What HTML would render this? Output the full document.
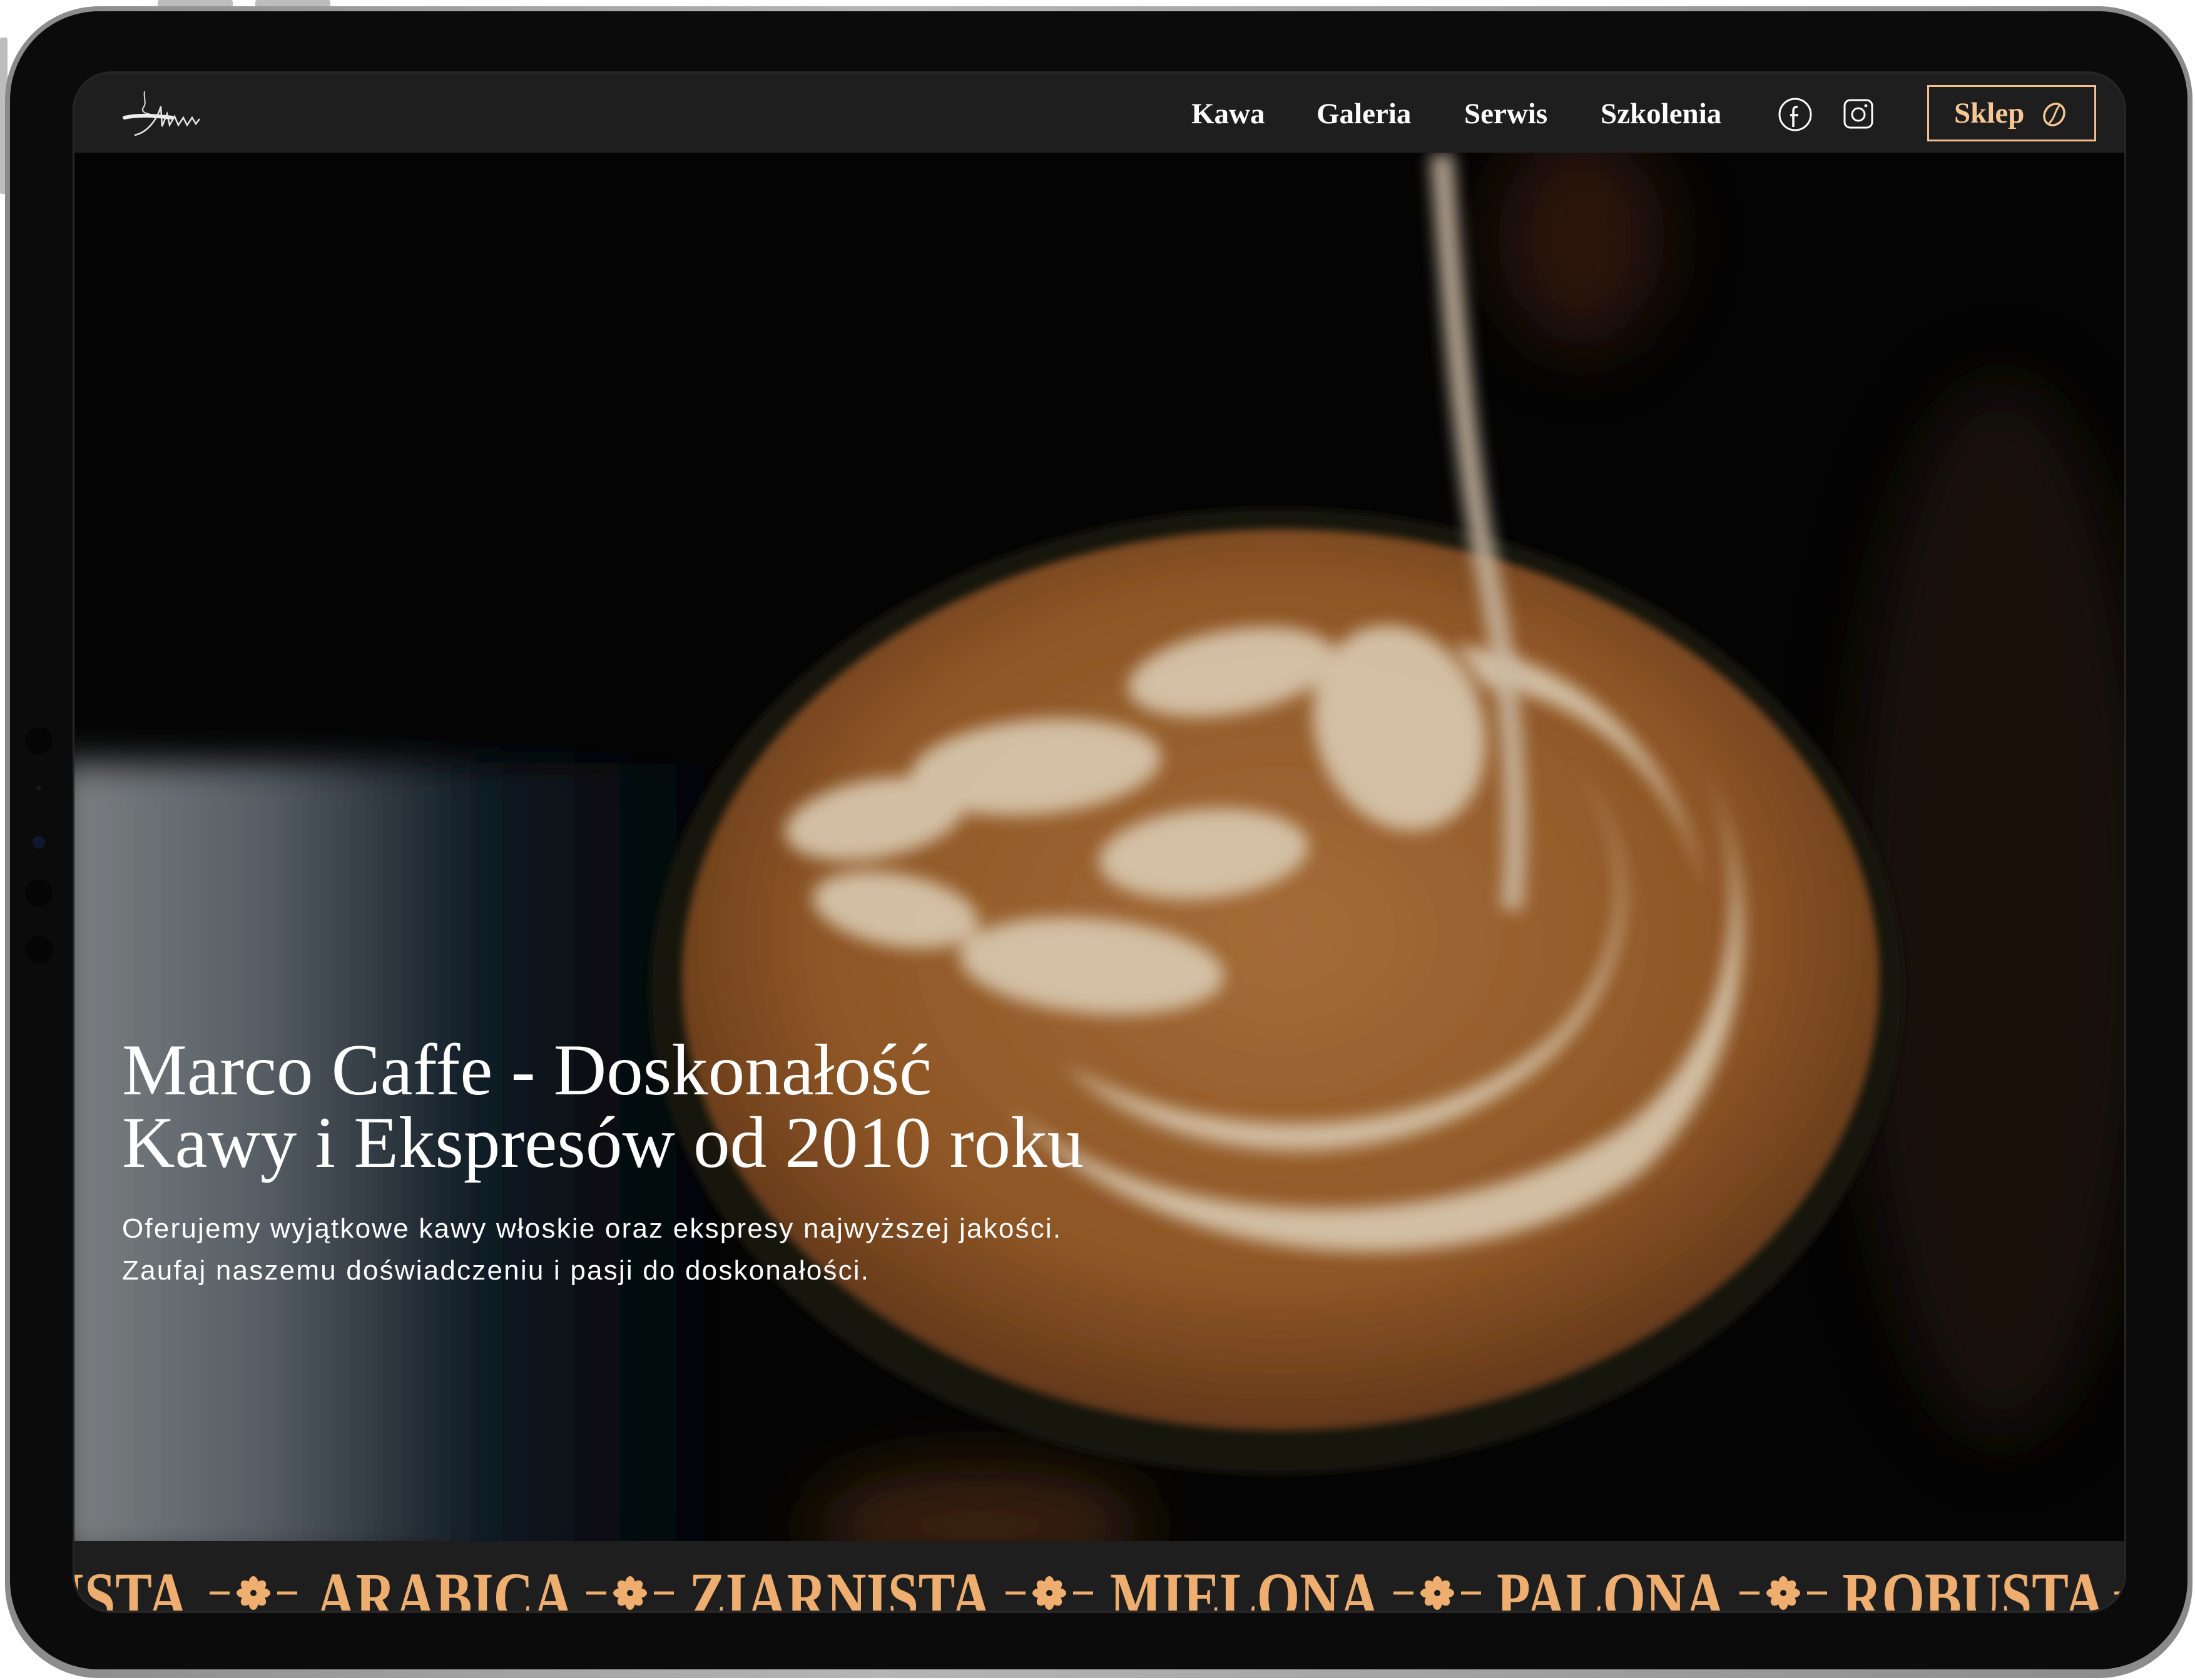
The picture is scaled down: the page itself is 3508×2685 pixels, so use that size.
<!DOCTYPE html>
<html><head><meta charset="utf-8"><style>
*{margin:0;padding:0;box-sizing:border-box}
html,body{width:3508px;height:2685px;background:#fff;overflow:hidden;position:relative;font-family:"Liberation Sans",sans-serif}
.abs{position:absolute}
.nav a{position:absolute;top:34px;font-family:"Liberation Serif",serif;font-weight:bold;font-size:47px;color:#fff;text-decoration:none;line-height:60px}
.mq{position:absolute;top:34px;font-family:"Liberation Serif",serif;font-weight:bold;font-size:110px;line-height:110px;color:#eeae70;transform:scaleX(.8);transform-origin:0 0;white-space:nowrap}
</style></head><body>
<div class="abs" style="left:252px;top:0;width:120px;height:12px;background:#bdbdbd;border-radius:3px"></div>
<div class="abs" style="left:408px;top:0;width:120px;height:12px;background:#bdbdbd;border-radius:3px"></div>
<div class="abs" style="left:0;top:60px;width:12px;height:250px;background:#bdbdbd;border-radius:3px"></div>
<div class="abs" style="left:8px;top:10px;width:3496px;height:2672px;border-radius:150px;background:linear-gradient(90deg,#8a8a8a,#b5b5b5 40%,#8a8a8a)"></div>
<div class="abs" style="left:16px;top:18px;width:3480px;height:2650px;border-radius:142px;background:#0b0b0b"></div>
<div class="abs" style="left:40px;top:1162px;width:44px;height:44px;border-radius:50%;background:#050505"></div>
<div class="abs" style="left:58px;top:1255px;width:8px;height:8px;border-radius:50%;background:#1a1a1a"></div>
<div class="abs" style="left:52px;top:1336px;width:20px;height:20px;border-radius:50%;background:#101830"></div>
<div class="abs" style="left:40px;top:1405px;width:44px;height:44px;border-radius:50%;background:#050505"></div>
<div class="abs" style="left:40px;top:1496px;width:44px;height:44px;border-radius:50%;background:#050505"></div>
<div class="abs" style="left:116px;top:114px;width:3282px;height:2464px;border-radius:62px;background:#262626"></div>
<div class="abs" style="left:119px;top:118px;width:3276px;height:2456px;border-radius:58px;background:#1e1e1e;overflow:hidden">
  <svg class="abs" style="left:0;top:126px" width="3276" height="2219" viewBox="53 109 1465 992" preserveAspectRatio="none">
    <defs>
      <filter id="b1" x="-50%" y="-50%" width="200%" height="200%"><feGaussianBlur stdDeviation="6"/></filter>
      <filter id="b2" x="-100%" y="-100%" width="300%" height="300%"><feGaussianBlur stdDeviation="25"/></filter>
      <filter id="b4" x="-50%" y="-50%" width="200%" height="200%"><feGaussianBlur stdDeviation="12"/></filter>
      <filter id="b3" x="-20%" y="-20%" width="140%" height="140%"><feGaussianBlur stdDeviation="3"/></filter>
      <radialGradient id="cr" cx="0.5" cy="0.45" r="0.55">
        <stop offset="0" stop-color="#a46c38"/><stop offset="0.7" stop-color="#8e5626"/><stop offset="1" stop-color="#63381a"/>
      </radialGradient>
      <linearGradient id="lp" x1="0" x2="1" y1="0" y2="0">
        <stop offset="0" stop-color="#7e8184"/><stop offset="0.3" stop-color="#555d63"/><stop offset="0.6" stop-color="#111c26"/><stop offset="1" stop-color="#0a1018" stop-opacity="0"/>
      </linearGradient>
    </defs>
    <rect x="53" y="109" width="1465" height="992" fill="#040404"/>
    <ellipse cx="1130" cy="170" rx="60" ry="80" fill="#3a1a10" filter="url(#b2)" opacity=".7"/>
    <ellipse cx="1430" cy="650" rx="110" ry="380" fill="#22120c" filter="url(#b2)" opacity=".7"/>
    <rect x="40" y="545" width="500" height="570" fill="url(#lp)" filter="url(#b4)"/>
    <ellipse cx="700" cy="1090" rx="120" ry="40" fill="#3a2010" filter="url(#b2)"/>
    <ellipse cx="912" cy="708" rx="448" ry="345" fill="#161310" filter="url(#b3)"/>
    <ellipse cx="915" cy="700" rx="428" ry="322" fill="url(#cr)" filter="url(#b3)"/>
    <g fill="#d6c4aa" filter="url(#b1)" opacity=".95">
      <path d="M720 790 C820 880 1030 890 1160 805 C1240 745 1260 620 1210 530 C1270 640 1250 770 1170 840 C1040 930 820 905 720 790Z"/>
      <path d="M760 760 C860 820 1020 820 1110 740 C1170 680 1170 600 1120 540 C1190 620 1160 720 1090 770 C980 850 830 830 760 760Z"/>
      <ellipse cx="625" cy="585" rx="65" ry="28" transform="rotate(-10 625 585)"/>
      <ellipse cx="740" cy="548" rx="90" ry="34" transform="rotate(-5 740 548)"/>
      <ellipse cx="640" cy="650" rx="60" ry="26" transform="rotate(10 640 650)"/>
      <ellipse cx="780" cy="690" rx="95" ry="34" transform="rotate(5 780 690)"/>
      <ellipse cx="860" cy="610" rx="75" ry="32" transform="rotate(-5 860 610)"/>
      <ellipse cx="880" cy="480" rx="75" ry="30" transform="rotate(-10 880 480)"/>
      <ellipse cx="1000" cy="520" rx="60" ry="75" transform="rotate(-20 1000 520)"/>
      <path d="M1040 460 C1130 470 1200 540 1220 640 C1200 560 1140 500 1060 490Z"/>
    </g>
    <path d="M1030 110 C1040 250 1050 350 1065 420 C1085 520 1085 600 1080 650" stroke="#c9b8a2" stroke-width="16" fill="none" filter="url(#b1)" opacity=".9"/>
  </svg>
  <div class="abs" style="left:0;top:0;width:3276px;height:126px;background:#1e1e1e"></div>
  <svg class="abs" style="left:76px;top:24px" width="170" height="80" viewBox="0 0 170 80">
    <path d="M36 4 C34 14 40 22 34 30 C30 36 38 40 44 40" stroke="#ddd" stroke-width="2" fill="none"/>
    <path d="M4 46 C30 40 60 44 80 46" stroke="#eee" stroke-width="6" fill="none" stroke-linecap="round"/>
    <path d="M20 74 C40 70 56 50 62 28 L64 60 L72 40 L76 58 L84 44 L90 58 L98 46 L104 58 L112 46 L118 56 L124 48" stroke="#e6e6e6" stroke-width="2.5" fill="none"/>
  </svg>
  <div class="nav">
    <a style="left:1785px">Kawa</a>
    <a style="left:1985px">Galeria</a>
    <a style="left:2221px">Serwis</a>
    <a style="left:2439px">Szkolenia</a>
  </div>
  <svg class="abs" style="left:2722px;top:37px" width="56" height="56" viewBox="0 0 56 56">
    <circle cx="28" cy="28" r="25" stroke="#fff" stroke-width="3" fill="none"/>
    <path d="M32 16 C26 15 25 19 25 23 L25 48 M20 29 L33 29" stroke="#fff" stroke-width="3.5" fill="none"/>
  </svg>
  <svg class="abs" style="left:2826px;top:39px" width="50" height="50" viewBox="0 0 50 50">
    <rect x="3" y="3" width="44" height="44" rx="9" stroke="#fff" stroke-width="3" fill="none"/>
    <circle cx="25" cy="26" r="10" stroke="#fff" stroke-width="3" fill="none"/>
    <circle cx="37" cy="12" r="2.5" fill="#fff"/>
  </svg>
  <div class="abs" style="left:2961px;top:18px;width:270px;height:90px;border:3px solid #f2c08e;color:#f6c795;font-family:'Liberation Serif',serif;font-weight:bold;font-size:47px;line-height:84px;padding-left:40px">Sklep</div>
  <svg class="abs" style="left:3142px;top:43px" width="44" height="44" viewBox="0 0 44 44">
    <ellipse cx="22" cy="22" rx="15" ry="18" transform="rotate(35 22 22)" stroke="#f6c795" stroke-width="3.5" fill="none"/>
    <path d="M30 8 C22 18 24 26 14 36" stroke="#f6c795" stroke-width="3" fill="none"/>
  </svg>
  <div class="abs" style="left:76px;top:1535px;font-family:'Liberation Serif',serif;font-size:117px;line-height:116px;color:#fff;white-space:nowrap">Marco Caffe - Doskonałość<br>Kawy i Ekspresów od 2010 roku</div>
  <div class="abs" style="left:76px;top:1812px;font-size:44px;line-height:67px;letter-spacing:2.2px;color:#fff;white-space:nowrap">Oferujemy wyjątkowe kawy włoskie oraz ekspresy najwyższej jakości.<br>Zaufaj naszemu doświadczeniu i pasji do doskonałości.</div>
  <div class="abs" style="left:0;top:2345px;width:3276px;height:111px;background:#1e1e1e;overflow:hidden">
    <div class="mq" style="left:-18px">ISTA</div>
    <div class="mq" style="left:386px">ARABICA</div>
    <div class="mq" style="left:982px">ZIARNISTA</div>
    <div class="mq" style="left:1655px">MIELONA</div>
    <div class="mq" style="left:2273px">PALONA</div>
    <div class="mq" style="left:2825px">ROBUSTA</div>
    <svg class="abs" style="left:0;top:0" width="3276" height="111" viewBox="0 0 3276 111">
      <defs>
        <g id="fl">
          <path d="M-70 0 L-38 0 M38 0 L70 0" stroke="#eeae70" stroke-width="5"/>
          <g fill="#eeae70">
            <ellipse cx="0" cy="-14" rx="8" ry="13"/><ellipse cx="0" cy="14" rx="8" ry="13"/>
            <ellipse cx="-14" cy="0" rx="13" ry="8"/><ellipse cx="14" cy="0" rx="13" ry="8"/>
            <ellipse cx="-10" cy="-10" rx="8" ry="12" transform="rotate(-45 -10 -10)"/><ellipse cx="10" cy="10" rx="8" ry="12" transform="rotate(-45 10 10)"/>
            <ellipse cx="10" cy="-10" rx="8" ry="12" transform="rotate(45 10 -10)"/><ellipse cx="-10" cy="10" rx="8" ry="12" transform="rotate(45 -10 10)"/>
          </g>
          <circle r="5" fill="#1e1e1e"/>
        </g>
      </defs>
      <use href="#fl" x="286" y="83"/>
      <use href="#fl" x="888" y="83"/>
      <use href="#fl" x="1558" y="83"/>
      <use href="#fl" x="2178" y="83"/>
      <use href="#fl" x="2731" y="83"/>
      <path d="M3260 83 L3290 83" stroke="#eeae70" stroke-width="5"/>
    </svg>
  </div>
</div>
</body></html>
